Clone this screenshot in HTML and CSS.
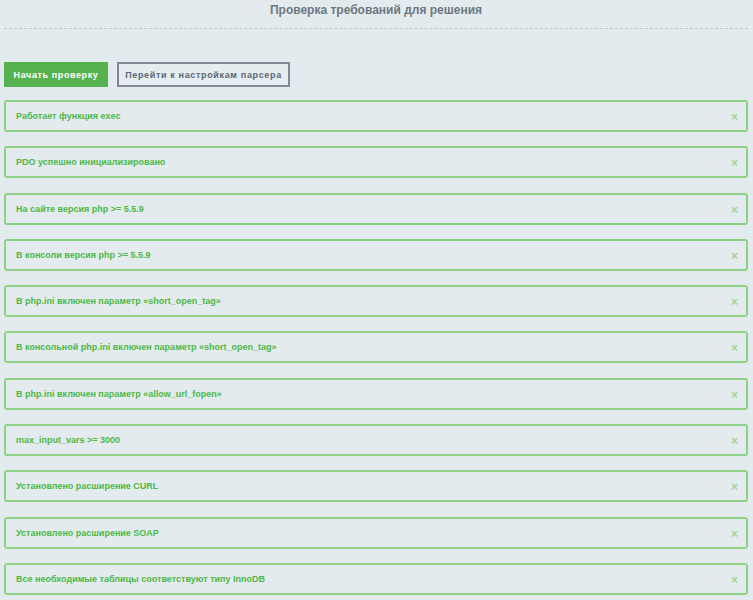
FILE: index.html
```html
<!DOCTYPE html>
<html lang="ru">
<head>
    <meta charset="UTF-8">
    <title>Проверка требований для решения</title>
    <link rel="stylesheet" href="styles.css">
</head>
<body>
    <div class="page">
        <h1 class="title">Проверка требований для решения</h1>

        <div class="actions">
            <button class="btn btn-green">Начать проверку</button>
            <button class="btn btn-outline">Перейти к настройкам парсера</button>
        </div>

        <div class="checks">
            <div class="check">Работает функция exec<span class="close">&times;</span></div>
            <div class="check">PDO успешно инициализировано<span class="close">&times;</span></div>
            <div class="check">На сайте версия php &gt;= 5.5.9<span class="close">&times;</span></div>
            <div class="check">В консоли версия php &gt;= 5.5.9<span class="close">&times;</span></div>
            <div class="check">В php.ini включен параметр «short_open_tag»<span class="close">&times;</span></div>
            <div class="check">В консольной php.ini включен параметр «short_open_tag»<span class="close">&times;</span></div>
            <div class="check">В php.ini включен параметр «allow_url_fopen»<span class="close">&times;</span></div>
            <div class="check">max_input_vars &gt;= 3000<span class="close">&times;</span></div>
            <div class="check">Установлено расширение CURL<span class="close">&times;</span></div>
            <div class="check">Установлено расширение SOAP<span class="close">&times;</span></div>
            <div class="check">Все необходимые таблицы соответствуют типу InnoDB<span class="close">&times;</span></div>
        </div>
    </div>
</body>
</html>
```

FILE: styles.css
```css
* {
    margin: 0;
    padding: 0;
    box-sizing: border-box;
    font-family: "Liberation Sans", Arial, sans-serif;
}

body {
    background: #e4ebee;
    overflow: hidden;
}

.page {
    padding: 0 5px 0 4px;
}

.title {
    text-align: center;
    font-size: 12px;
    font-weight: bold;
    color: #6b7882;
    line-height: 18px;
    padding-top: 1px;
    padding-bottom: 9px;
    border-bottom: 1px dashed #bcc5ca;
    margin-bottom: 33px;
}

.actions {
    display: flex;
    gap: 9px;
    margin-bottom: 13px;
}

.btn {
    height: 25px;
    font-size: 9px;
    font-weight: bold;
    padding: 0;
    white-space: nowrap;
    text-align: center;
    cursor: pointer;
}

.btn-green {
    background: #55b24f;
    color: #fff;
    border: none;
    width: 104px;
    letter-spacing: 0.6px;
}

.btn-outline {
    background: #e6edf0;
    color: #5b6770;
    border: 2px solid #7e8b94;
    width: 173px;
    letter-spacing: 0.65px;
}

.check {
    position: relative;
    height: 32px;
    line-height: 28px;
    padding: 0 10px;
    margin-bottom: 14.3px;
    border: 2px solid #8ed285;
    border-radius: 3px;
    color: #4db846;
    font-size: 9px;
    font-weight: bold;
}

.close {
    position: absolute;
    right: 8px;
    top: 1px;
    color: #9dd598;
    font-size: 12px;
    font-weight: bold;
}
```
